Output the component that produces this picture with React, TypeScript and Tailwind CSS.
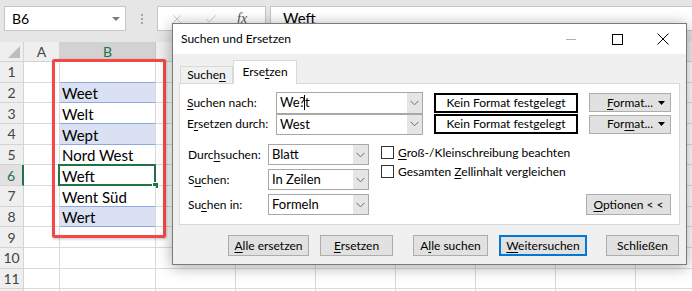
import { X, Check } from 'lucide-react';

const sheetRows = [
  { n: 1, text: '', fill: false, table: true },
  { n: 2, text: 'Weet', fill: true, table: true },
  { n: 3, text: 'Welt', fill: false, table: true },
  { n: 4, text: 'Wept', fill: true, table: true },
  { n: 5, text: 'Nord West', fill: false, table: true },
  { n: 6, text: 'Weft', fill: false, table: true },
  { n: 7, text: 'Went Süd', fill: false, table: true },
  { n: 8, text: 'Wert', fill: true, table: true },
  { n: 9, text: '', fill: false, table: false },
  { n: 10, text: '', fill: false, table: false },
  { n: 11, text: '', fill: false, table: false },
  { n: 12, text: '', fill: false, table: false },
];

const restCols = ['C', 'D', 'E', 'F', 'G', 'H', 'I'];

function Chevron() {
  return (
    <svg width="9" height="6" viewBox="0 0 9 6" fill="none">
      <polyline points="0.5,0.8 4.5,4.8 8.5,0.8" stroke="#6b6b6b" strokeWidth="1" />
    </svg>
  );
}

function Combo({ value, caret, width }: { value: string; caret?: boolean; width: string }) {
  return (
    <div className={`flex h-full ${width} border border-[#a8a8a8] bg-white`}>
      <div className="flex flex-1 items-center pl-[3px] text-[13px] text-black">
        {caret ? (
          <span>
            We?
            <span className="relative inline-block w-0">
              <span className="absolute -left-[1px] -top-[12px] h-[15px] w-px bg-black" />
            </span>
            t
          </span>
        ) : (
          value
        )}
      </div>
      <div className="flex w-[15px] items-center justify-center bg-[#e5e5e5]">
        <Chevron />
      </div>
    </div>
  );
}

function FormatButton({ children }: { children: React.ReactNode }) {
  return (
    <div className="ml-[11px] flex h-[19px] w-[82px] items-center border border-[#adadad] bg-[#e1e1e1] pl-[17px] pr-[5px] text-[12px]">
      <span>{children}</span>
      <svg className="ml-auto" width="7" height="4" viewBox="0 0 7 4">
        <polygon points="0,0 7,0 3.5,4" fill="#000" />
      </svg>
    </div>
  );
}

function Btn({ children, width, primary }: { children: React.ReactNode; width: string; primary?: boolean }) {
  return (
    <div
      className={`flex h-[21px] ${width} items-center justify-center bg-[#e1e1e1] text-[12px] ${
        primary ? 'border-2 border-[#0078d7]' : 'border border-[#adadad]'
      }`}
    >
      {children}
    </div>
  );
}

export default function App() {
  return (
    <div className="relative h-[291px] w-[692px] overflow-hidden bg-white font-[Lato,sans-serif] text-black">
      {/* Formula bar */}
      <div className="flex h-[42px] items-start bg-[#e6e6e6] pl-[4px] pt-[6px]">
        <div className="flex h-[25px] w-[122px] items-center border border-[#c6c6c6] bg-white pl-[7px] pr-[5px] text-[14px]">
          <span>B6</span>
          <svg className="ml-auto" width="8" height="4" viewBox="0 0 8 4">
            <polygon points="0,0 8,0 4,4" fill="#7a7a7a" />
          </svg>
        </div>
        <div className="flex h-[25px] w-[31px] flex-col items-center justify-center gap-[2px]">
          <span className="h-[2px] w-[2px] bg-[#a6a6a6]" />
          <span className="h-[2px] w-[2px] bg-[#a6a6a6]" />
          <span className="h-[2px] w-[2px] bg-[#a6a6a6]" />
        </div>
        <div className="flex h-[25px] w-[109px] items-center border border-[#c6c6c6] bg-white">
          <X className="ml-[12px] h-[14px] w-[14px] text-[#c4c4c4]" strokeWidth={1.5} />
          <Check className="ml-[20px] h-[14px] w-[14px] text-[#c4c4c4]" strokeWidth={1.5} />
          <span className="ml-[19px] font-['Liberation_Serif',serif] text-[14px] italic text-[#555]">fx</span>
        </div>
        <div className="ml-[4px] flex h-[25px] flex-1 items-center border border-r-0 border-[#c6c6c6] bg-white pl-[12px] text-[15px]">
          Weft
        </div>
      </div>

      {/* Column headers */}
      <div className="flex h-[20px] bg-[#efefef] text-[14px] text-[#444]">
        <div className="relative w-[24px] shrink-0 border-b border-r border-[#d4d4d4]">
          <svg className="absolute bottom-[3px] right-[3px]" width="12" height="12" viewBox="0 0 12 12">
            <polygon points="12,0 12,12 0,12" fill="#bdbdbd" />
          </svg>
        </div>
        <div className="flex w-[36px] shrink-0 items-center justify-center border-b border-r border-[#d4d4d4]">A</div>
        <div className="flex w-[96px] shrink-0 items-center justify-center border-b-2 border-r border-b-[#217346] border-r-[#c6c6c6] bg-[#d2d2d2] text-[#217346]">
          B
        </div>
        {restCols.map(c => (
          <div key={c} className="flex w-[80px] shrink-0 items-center justify-center border-b border-r border-[#d4d4d4]">
            {c}
          </div>
        ))}
      </div>

      {/* Rows */}
      {sheetRows.map(r => (
        <div key={r.n} className="flex h-[20.67px]">
          <div
            className={`flex w-[24px] shrink-0 items-center justify-center border-b border-[#d4d4d4] text-[14px] ${
              r.n === 6 ? 'border-r-2 border-r-[#217346] bg-[#e1e1e1] text-[#217346]' : 'border-r bg-[#efefef] text-[#444]'
            }`}
          >
            {r.n < 12 ? r.n : ''}
          </div>
          <div className="w-[36px] shrink-0 border-b border-r border-[#dadada]" />
          <div
            className={`relative flex w-[96px] shrink-0 items-center border-r border-r-[#dadada] pl-[2px] pt-[2px] text-[15px] ${
              r.table ? 'border-b border-b-[#8ea9db]' : 'border-b border-b-[#dadada]'
            } ${r.fill ? 'bg-[#d9e1f2]' : 'bg-white'}`}
          >
            {r.text}
            {r.n === 6 && (
              <>
                <div className="absolute -left-[2px] -top-[1px] bottom-[-1px] -right-[1px] border-2 border-[#217346]" />
                <div className="absolute -bottom-[4px] -right-[4px] h-[7px] w-[7px] border border-white bg-[#217346]" />
              </>
            )}
          </div>
          {restCols.map(c => (
            <div key={c} className="w-[80px] shrink-0 border-b border-r border-[#dadada]" />
          ))}
        </div>
      ))}

      {/* Red highlight */}
      <div className="absolute left-[52px] top-[59px] h-[179px] w-[114px] rounded-[2px] border-[3px] border-[#f44848] shadow-[1px_1px_3px_rgba(0,0,0,0.25)]" />

      {/* Dialog */}
      <div className="absolute left-[172px] top-[23px] flex h-[242px] w-[515px] flex-col border border-[#7a7a7a] bg-[#f0f0f0] text-[12px] shadow-[0_2px_14px_rgba(0,0,0,0.35)]">
        <div className="flex h-[30px] shrink-0 items-center bg-white">
          <span className="pl-[8px] text-[12px]">Suchen und Ersetzen</span>
          <div className="ml-auto flex h-full">
            <div className="flex w-[46px] items-center justify-center">
              <span className="h-px w-[10px] bg-[#b0b0b0]" />
            </div>
            <div className="flex w-[46px] items-center justify-center">
              <span className="h-[11px] w-[11px] border border-black" />
            </div>
            <div className="flex w-[46px] items-center justify-center">
              <svg width="12" height="12" viewBox="0 0 12 12">
                <path d="M0.5 0.5 L11.5 11.5 M11.5 0.5 L0.5 11.5" stroke="#000" strokeWidth="1" />
              </svg>
            </div>
          </div>
        </div>

        {/* Tabs */}
        <div className="flex h-[29px] shrink-0 items-end pl-[7px]">
          <div className="flex h-[17px] w-[53px] items-center justify-center border border-b-0 border-[#d9d9d9] pb-[1px]">
            <span>
              Suche<u className="underline-offset-2">n</u>
            </span>
          </div>
          <div className="relative z-10 -mb-px flex h-[24px] w-[64px] items-center justify-center border border-b-0 border-[#d9d9d9] bg-white pb-[2px]">
            <span>
              Erse<u className="underline-offset-2">t</u>zen
            </span>
          </div>
        </div>

        {/* Panel */}
        <div className="ml-[6px] flex h-[142px] w-[501px] shrink-0 flex-col border border-[#d9d9d9] bg-white pl-[7px] pr-[8px] pt-[8px]">
          <div className="flex h-[22px] items-center">
            <span className="w-[89px]">
              <u className="underline-offset-2">S</u>uchen nach:
            </span>
            <Combo value="We?t" caret width="w-[147px]" />
            <div className="ml-[11px] flex h-[20px] w-[144px] items-center justify-center border-2 border-black">Kein Format festgelegt</div>
            <FormatButton>
              <u className="underline-offset-2">F</u>ormat...
            </FormatButton>
          </div>
          <div className="flex h-[22px] items-center">
            <span className="w-[89px]">
              E<u className="underline-offset-2">r</u>setzen durch:
            </span>
            <Combo value="West" width="w-[147px]" />
            <div className="ml-[11px] flex h-[20px] w-[144px] items-center justify-center border-2 border-black">Kein Format festgelegt</div>
            <FormatButton>
              For<u className="underline-offset-2">m</u>at...
            </FormatButton>
          </div>

          <div className="mt-[9px] flex flex-1 pb-[9px]">
            <div className="flex flex-col gap-[4px] pl-[1px]">
              {[
                { label: <>Durc<u className="underline-offset-2">h</u>suchen:</>, value: 'Blatt' },
                { label: <>S<u className="underline-offset-2">u</u>chen:</>, value: 'In Zeilen' },
                { label: <>Su<u className="underline-offset-2">c</u>hen in:</>, value: 'Formeln' },
              ].map((f, i) => (
                <div key={i} className="flex h-[21px] items-center">
                  <span className="w-[80px]">{f.label}</span>
                  <Combo value={f.value} width="w-[101px]" />
                </div>
              ))}
            </div>
            <div className="ml-[12px] flex flex-col gap-[2px]">
              <div className="flex h-[17px] items-center gap-[4px]">
                <span className="h-[13px] w-[13px] border border-[#333]" />
                <span>
                  <u className="underline-offset-2">G</u>roß-/Kleinschreibung beachten
                </span>
              </div>
              <div className="flex h-[17px] items-center gap-[4px]">
                <span className="h-[13px] w-[13px] border border-[#333]" />
                <span>
                  Gesamten <u className="underline-offset-2">Z</u>ellinhalt vergleichen
                </span>
              </div>
            </div>
            <div className="ml-auto flex items-end">
              <Btn width="w-[85px]">
                <span>
                  <u className="underline-offset-2">O</u>ptionen &lt; &lt;
                </span>
              </Btn>
            </div>
          </div>
        </div>

        {/* Bottom buttons */}
        <div className="mt-[10px] flex pl-[55px]">
          <Btn width="w-[81px]">
            <span><u className="underline-offset-2">A</u>lle ersetzen</span>
          </Btn>
          <div className="ml-[11px]">
            <Btn width="w-[73px]">
              <span><u className="underline-offset-2">E</u>rsetzen</span>
            </Btn>
          </div>
          <div className="ml-[20px]">
            <Btn width="w-[75px]">
              <span>A<u className="underline-offset-2">l</u>le suchen</span>
            </Btn>
          </div>
          <div className="ml-[11px]">
            <Btn width="w-[88px]" primary>
              <span><u className="underline-offset-2">W</u>eitersuchen</span>
            </Btn>
          </div>
          <div className="ml-[19px]">
            <Btn width="w-[73px]">
              <span>Schließen</span>
            </Btn>
          </div>
        </div>
      </div>
    </div>
  );
}
